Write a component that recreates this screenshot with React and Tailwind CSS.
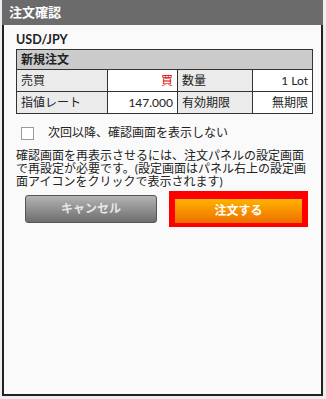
import React from 'react'

// 注文確認 dialog
const FONT = { fontFamily: 'Lato, "Noto Sans CJK JP", sans-serif' }

function Cell({ children, label, right, red }) {
  return (
    <td
      className={
        'border border-[#333] h-[22px] px-[4px] text-[12px] leading-none ' +
        (label ? 'bg-[#ebebeb] text-[#222]' : 'bg-white text-[#222]') +
        (right ? ' text-right' : ' text-left') +
        (red ? ' !text-[#e00000]' : '')
      }
    >
      {children}
    </td>
  )
}

export default function App() {
  return (
    <div className="w-[326px] h-[399px] bg-[#eeeeee] pl-[2px] pr-[3px] pb-[3px]" style={FONT}>
      <div className="h-full border-2 border-t-0 border-[#222] bg-[#fafafa] flex flex-col">
        <div className="h-[25px] -mx-[2px] bg-[#6b6b6b] flex items-center pl-[7px] text-white text-[13px] font-bold">
          注文確認
        </div>

        <div className="px-[12px]">
          <div className="mt-[5px] text-[12.5px] font-bold text-[#222] leading-[19px]">USD/JPY</div>

          <table className="w-[296px] border-collapse table-fixed">
            <colgroup>
              <col className="w-[91px]" />
              <col className="w-[70px]" />
              <col className="w-[75px]" />
              <col className="w-[60px]" />
            </colgroup>
            <tbody>
              <tr>
                <td colSpan={4} className="border border-[#333] bg-[#cbcbcb] h-[20px] px-[4px] text-[12px] font-bold text-[#222] leading-none">
                  新規注文
                </td>
              </tr>
              <tr>
                <Cell label>売買</Cell>
                <Cell right red>買</Cell>
                <Cell label>数量</Cell>
                <Cell right>1 Lot</Cell>
              </tr>
              <tr>
                <Cell label>指値レート</Cell>
                <Cell right>147.000</Cell>
                <Cell label>有効期限</Cell>
                <Cell right>無期限</Cell>
              </tr>
            </tbody>
          </table>

          <label className="flex items-center mt-[10px] ml-[5px] text-[12px] text-[#222]">
            <span className="w-[13px] h-[13px] border border-[#9a9a9a] bg-white" />
            <span className="ml-[14px]">次回以降、確認画面を表示しない</span>
          </label>

          <p className="mt-[7px] text-[12px] leading-[13px] text-[#222]">
            確認画面を再表示させるには、注文パネルの設定画面で再設定が必要です。(設定画面はパネル右上の設定画面アイコンをクリックで表示されます)
          </p>

          <div className="flex items-center mt-[3px] h-[36px]">
            <button className="ml-[9px] w-[132px] h-[28px] rounded-[3px] border border-[#555] bg-gradient-to-b from-[#b4b4b4] to-[#6e6e6e] text-[#e6e6e6] text-[12px] font-bold">
              キャンセル
            </button>
            <div className="ml-[12px] w-[139px] h-[36px] bg-[#ff0000] p-[6px]">
              <button className="w-full h-full bg-gradient-to-b from-[#ffb300] to-[#ec6e00] text-white text-[12px] font-bold">
                注文する
              </button>
            </div>
          </div>
        </div>
      </div>
    </div>
  )
}
